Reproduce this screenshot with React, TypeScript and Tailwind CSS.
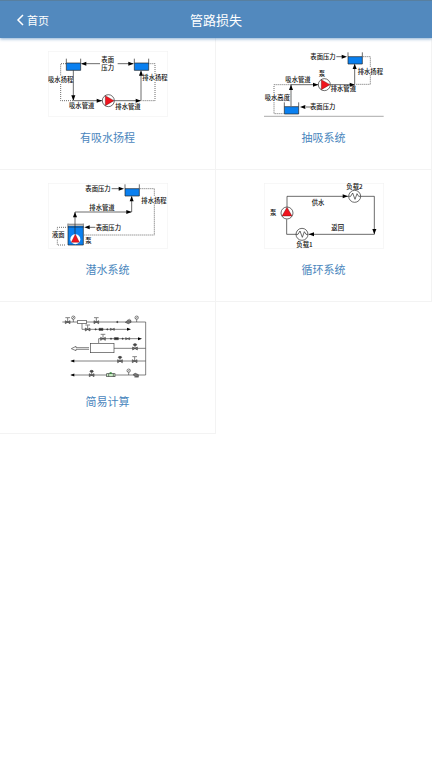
import type { ReactNode } from "react";

const BLUE = "#0a80f0";
const RED = "#f0141e";

interface DiagramProps {
  label: string;
  viewBox?: string;
  children: ReactNode;
}

// All diagrams are drawn in a 360 x 198 space
const Diagram = ({ label, viewBox = "24 21 360 198", children }: DiagramProps) => (
  <svg
    role="img"
    aria-label={label}
    viewBox={viewBox}
    className="block h-[66px] w-[120px]"
    fill="none"
    stroke="#222"
    strokeWidth={2}
  >
    {children}
  </svg>
);

const Frame = () => <rect x={25} y={22} width={358} height={195} stroke="#f3f3f3" />;

const Label = ({ x, y, children }: { x: number; y: number; children: string }) => (
  <text x={x} y={y + 7} fontSize={19} fontWeight={500} fill="#111" stroke="none">
    {children}
  </text>
);

// Arrow head with its tip at (x, y)
const Head = ({ x, y, turn = 0, size = 16 }: { x: number; y: number; turn?: number; size?: number }) => (
  <path
    d={`M0 0L${-size} ${-size * 0.38}V${size * 0.38}Z`}
    transform={`translate(${x} ${y}) rotate(${turn})`}
    fill="#000"
    stroke="none"
  />
);

const Tank = ({ x, y }: { x: number; y: number }) => (
  <g>
    <rect x={x} y={y + 13} width={43} height={22} fill={BLUE} stroke="none" />
    <path d={`M${x} ${y}V${y + 35}H${x + 43}V${y}M${x} ${y + 13}H${x + 43}`} />
  </g>
);

const Pump = ({ x, y, turn = 0 }: { x: number; y: number; turn?: number }) => (
  <g transform={`translate(${x} ${y}) rotate(${turn})`}>
    <circle r={18} fill="#fff" />
    <path d="M-9-15V15L17 0Z" fill={RED} stroke="#300" strokeWidth={1} />
  </g>
);

const Load = ({ x, y }: { x: number; y: number }) => (
  <g transform={`translate(${x} ${y})`}>
    <circle r={18} fill="#fff" />
    <path d="M-18 0H-12L-6-10L1 9L7-8L12 0H18" />
  </g>
);

const SuctionLift = () => (
  <Diagram label="有吸水扬程">
    <Frame />
    <path d="M78 59H62V95M62 120V170H100M325 59H345V90M345 114V170H304" strokeDasharray="3 3" />
    <Tank x={79} y={44} />
    <Tank x={283} y={44} />
    <path d="M125 59H180M233 59H280M100 79V168M100 170H302M303 169V82" />
    <Head x={123} y={59} turn={180} />
    <Head x={281} y={59} />
    <Head x={100} y={170} turn={90} />
    <Head x={186} y={170} />
    <Head x={303} y={170} />
    <Head x={303} y={79} turn={-90} />
    <Pump x={205} y={170} />
    <Label x={184} y={48}>表面</Label>
    <Label x={184} y={71}>压力</Label>
    <Label x={24} y={107}>吸水扬程</Label>
    <Label x={307} y={102}>排水扬程</Label>
    <Label x={87} y={185}>吸水管道</Label>
    <Label x={226} y={188}>排水管道</Label>
  </Diagram>
);

const SuctionSystem = () => (
  <Diagram label="抽吸系统">
    <path d="M24 218H383" stroke="#bbb" strokeWidth={5} />
    <path d="M104 122H54V150M54 175V209H82M322 38H343V70M343 94V121H298" strokeDasharray="3 3" />
    <Tank x={276} y={25} />
    <Tank x={85} y={175} />
    <path d="M105 186V122H295M296 121V62M241 38H260M150 189H164" />
    <Head x={105} y={122} turn={-90} />
    <Head x={187} y={122} />
    <Head x={297} y={122} />
    <Head x={296} y={59} turn={-90} />
    <Head x={273} y={38} />
    <Head x={132} y={189} turn={180} />
    <Pump x={205} y={122} />
    <Label x={163} y={38}>表面压力</Label>
    <Label x={188} y={90}>泵</Label>
    <Label x={88} y={107}>吸水管道</Label>
    <Label x={305} y={82}>排水扬程</Label>
    <Label x={224} y={135}>排水管道</Label>
    <Label x={26} y={162}>吸水高度</Label>
    <Label x={162} y={189}>表面压力</Label>
  </Diagram>
);

const DivingSystem = () => (
  <Diagram label="潜水系统">
    <Frame />
    <path d="M301 38H343V61M343 86V177H132M78 154H52V164M52 191V207H78" strokeDasharray="3 3" />
    <Tank x={255} y={25} />
    <rect x={84} y={150} width={46} height={57} fill={BLUE} stroke="none" />
    <path d="M84 143V207H130V143" />
    <path d="M83 146H131" stroke="#999" strokeWidth={6} />
    <path d="M83 153H131M105 176V108H274M275 108V62M215 38H240M148 154H166" />
    <Head x={105} y={108} turn={-90} />
    <Head x={275} y={108} />
    <Head x={275} y={60} turn={-90} />
    <Head x={252} y={38} />
    <Head x={133} y={154} turn={180} />
    <circle cx={106} cy={190} r={15} fill="#fff" stroke="none" />
    <path d="M106 175L118 199H94Z" fill={RED} stroke="#600" strokeWidth={1} />
    <Label x={136} y={38}>表面压力</Label>
    <Label x={148} y={94}>排水管道</Label>
    <Label x={304} y={73}>排水扬程</Label>
    <Label x={167} y={154}>表面压力</Label>
    <Label x={36} y={177}>液面</Label>
    <Label x={136} y={195}>泵</Label>
  </Diagram>
);

const CycleSystem = () => (
  <Diagram label="循环系统">
    <Frame />
    <path d="M93 94V61H278M314 61H355V175H158M121 175H92V130" />
    <Head x={276} y={61} />
    <Head x={355} y={175} turn={90} />
    <Head x={158} y={175} turn={180} />
    <Pump x={93} y={111} turn={-90} />
    <Load x={296} y={61} />
    <Load x={138} y={175} />
    <Label x={271} y={32}>负载2</Label>
    <Label x={167} y={79}>供水</Label>
    <Label x={42} y={110}>泵</Label>
    <Label x={226} y={155}>返回</Label>
    <Label x={121} y={207}>负载1</Label>
  </Diagram>
);

// Bow-tie valve with a T handle, or a round actuator
const Valve = ({ x, y, round = false }: { x: number; y: number; round?: boolean }) => (
  <g transform={`translate(${x} ${y})`}>
    <path d="M-7-4V5L7-4V5Z" fill="#777" />
    {round ? <ellipse cy={-11} rx={5} ry={3} fill="#444" /> : <path d="M-7-13H7" />}
    <path d="M0 0V-12" />
  </g>
);

const Gauge = ({ x, y }: { x: number; y: number }) => (
  <g transform={`translate(${x} ${y})`}>
    <circle cy={-13} r={5} />
    <path d="M0 0V-8M-3-10L3-16" />
  </g>
);

// Fittings strung along a branch pipe
const Fittings = ({ x, y }: { x: number; y: number }) => (
  <g transform={`translate(${x} ${y})`} fill="#222">
    <circle cx={24} r={2} />
    <path d="M34-3H46V3H34Z" />
    <circle cx={59} r={2} />
    <path d="M68-3V3L80-3V3Z" fill="#777" />
  </g>
);

const PipeNetwork = () => (
  <Diagram label="简易计算" viewBox="-6 27 360 198">
    <g stroke="#444">
      <path d="M37 48H287V207H64M96 52V70H236M146 111V98H270M192 127H287M287 165H64" />
      <rect x={82} y={44} width={28} height={8} fill="#fff" />
      <rect x={121} y={112} width={71} height={28} fill="#fff" />
      <path d="M117 125H78V121L64 128L78 134V130H117" fill="#fff" />
      <Valve x={53} y={48} />
      <Gauge x={70} y={48} />
      <Valve x={139} y={48} />
      <circle cx={202} cy={48} r={2} fill="#222" />
      <path d="M226 49L232 44H243V49L235 53Z" fill="#777" />
      <path d="M232 43L239 40L243 44" />
      <Gauge x={260} y={48} />
      <Valve x={113} y={70} />
      <Fittings x={113} y={70} />
      <Head x={243} y={70} size={12} />
      <Valve x={159} y={98} />
      <Fittings x={159} y={98} />
      <Head x={276} y={98} size={12} />
      <Valve x={255} y={127} round />
      <Valve x={210} y={165} round />
      <Valve x={254} y={165} />
      <Head x={61} y={165} turn={180} size={12} />
      <Valve x={125} y={207} round />
      <rect x={170} y={203} width={25} height={9} fill="#c8ecc4" />
      <path d="M176 203V212M190 203V212" />
      <path d="M179 199H185V203H179Z" fill="#187a20" stroke="none" />
      <Gauge x={236} y={207} />
      <path d="M250 205L256 202L265 206V212H257L251 208Z" fill="#777" />
      <path d="M253 213H266" />
      <Head x={61} y={207} turn={180} size={12} />
    </g>
  </Diagram>
);

const items = [
  { title: "有吸水扬程", Art: SuctionLift },
  { title: "抽吸系统", Art: SuctionSystem },
  { title: "潜水系统", Art: DivingSystem },
  { title: "循环系统", Art: CycleSystem },
  { title: "简易计算", Art: PipeNetwork },
];

export default function App() {
  return (
    <div className="min-h-screen bg-white font-['Noto_Sans_CJK_SC',sans-serif]">
      <header className="relative grid h-[38px] grid-cols-3 items-center border-t border-[#587f9f] bg-[#5289be] text-white shadow-[0_1px_3px_rgba(60,120,180,0.6)]">
        <a href="#home" className="flex items-center gap-[3px] pl-4 text-[11px] leading-4">
          <svg viewBox="0 0 8 12" className="h-3 w-2" fill="none" stroke="currentColor" strokeWidth={1.5} aria-hidden>
            <path d="M7 1L2 6L7 11" />
          </svg>
          首页
        </a>
        <h1 className="text-center text-[13px] leading-4">管路损失</h1>
      </header>

      <main className="grid grid-cols-2">
        {items.map(({ title, Art }) => (
          <a
            key={title}
            href={`#${title}`}
            className="flex flex-col items-center gap-3 border-r border-b border-[#f3f3f3] pt-[13px] pb-6 text-[#4a86bd]"
          >
            <Art />
            <span className="text-[11px] leading-4">{title}</span>
          </a>
        ))}
      </main>
    </div>
  );
}
